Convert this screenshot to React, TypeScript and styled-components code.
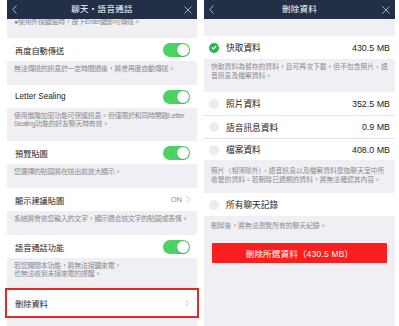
import React from "react";
import styled, { createGlobalStyle } from "styled-components";

const GlobalStyle = createGlobalStyle`
  html, body { margin: 0; padding: 0; background: #ffffff; }
  body { font-family: "Liberation Sans", "Noto Sans CJK TC", sans-serif; }
  * { box-sizing: border-box; }
`;

const Stage = styled.div`
  display: flex;
  gap: 7px;
  padding-left: 7px;
  height: 326px;
  width: 399px;
  overflow: hidden;
`;

const Phone = styled.div<{ $w: number }>`
  width: ${(p) => p.$w}px;
  flex-shrink: 0;
  height: 326px;
  background: #efeff4;
  display: flex;
  flex-direction: column;
`;

const NavBar = styled.div`
  position: relative;
  z-index: 1;
  height: 19px;
  flex-shrink: 0;
  background: #232e47;
  display: grid;
  grid-template-columns: 20px 1fr 20px;
  align-items: center;
  color: #ffffff;
`;

const NavTitle = styled.div`
  text-align: center;
  font-size: 8.5px;
  line-height: 19px;
  letter-spacing: 0.3px;
`;

const NavIcon = styled.div<{ $align: string }>`
  display: flex;
  justify-content: ${(p) => p.$align};
  padding: 0 5px;
`;

const Note = styled.div<{ $h: number; $pt: number; $fs: number; $lh: number; $ls?: number }>`
  height: ${(p) => p.$h}px;
  flex-shrink: 0;
  padding: ${(p) => p.$pt}px 6px 0 7px;
  font-size: ${(p) => p.$fs}px;
  line-height: ${(p) => p.$lh}px;
  letter-spacing: ${(p) => p.$ls ?? 0}px;
  color: #8a8a8f;
  white-space: nowrap;
`;

const CutText = styled.div`
  margin-top: -1px;
`;

const Row = styled.div<{ $h: number; $sep?: boolean; $pl: number; $pr: number; $fs: number }>`
  height: ${(p) => p.$h}px;
  flex-shrink: 0;
  background: #ffffff;
  display: flex;
  align-items: center;
  padding: 0 ${(p) => p.$pr}px 0 ${(p) => p.$pl}px;
  font-size: ${(p) => p.$fs}px;
  color: #1c1c1e;
  border-top: ${(p) => (p.$sep ? "1px solid #e2e2e7" : "none")};
`;

const Highlight = styled(Row)`
  outline: 2px solid #e52a25;
`;

const Label = styled.span`
  flex: 1;
  white-space: nowrap;
`;

const Value = styled.span`
  color: #1c1c1e;
  font-size: 8.9px;
`;

const Aside = styled.span`
  display: flex;
  align-items: center;
  gap: 4px;
  color: #8e8e93;
  font-size: 7.5px;
`;

const Toggle = styled.span`
  width: 27px;
  height: 14px;
  border-radius: 7px;
  background: #4bd262;
  position: relative;
  &::after {
    content: "";
    position: absolute;
    right: 1px;
    top: 1px;
    width: 12px;
    height: 12px;
    border-radius: 50%;
    background: #ffffff;
    box-shadow: 0 0.5px 1.5px rgba(0, 0, 0, 0.3);
  }
`;

const Circle = styled.span<{ $on?: boolean }>`
  width: 10px;
  height: 10px;
  border-radius: 50%;
  margin-right: 7px;
  flex-shrink: 0;
  background: ${(p) => (p.$on ? "#22b94a" : "#ebebf1")};
  display: flex;
  align-items: center;
  justify-content: center;
`;

const DangerButton = styled.button`
  margin: 13px 8px 0 8px;
  height: 20px;
  border: none;
  border-radius: 1px;
  background: #fb1e1e;
  color: #ffffff;
  font-family: inherit;
  font-size: 8.5px;
  letter-spacing: 0.2px;
  padding: 0;
`;

const Back = () => (
  <svg width="5" height="9" viewBox="0 0 5 9">
    <polyline points="4.5,0.5 0.8,4.5 4.5,8.5" fill="none" stroke="#d0d4dc" strokeWidth="0.8" />
  </svg>
);

const Close = () => (
  <svg width="8" height="8" viewBox="0 0 8 8">
    <path d="M0.5 0.5 L7.5 7.5 M7.5 0.5 L0.5 7.5" stroke="#c8ccd4" strokeWidth="0.8" />
  </svg>
);

const Chevron = () => (
  <svg width="4" height="7" viewBox="0 0 4 7">
    <polyline points="0.5,0.5 3.5,3.5 0.5,6.5" fill="none" stroke="#b8b8be" strokeWidth="0.8" />
  </svg>
);

const Check = () => (
  <svg width="6" height="5" viewBox="0 0 6 5">
    <polyline points="0.8,2.5 2.4,4 5.2,1" fill="none" stroke="#ffffff" strokeWidth="1.2" />
  </svg>
);

const Nav = ({ title }: { title: string }) => (
  <NavBar>
    <NavIcon $align="flex-start">
      <Back />
    </NavIcon>
    <NavTitle>{title}</NavTitle>
    <NavIcon $align="flex-end">
      <Close />
    </NavIcon>
  </NavBar>
);

const LRow = (props: { h?: number; children: React.ReactNode }) => (
  <Row $h={props.h ?? 23} $pl={8} $pr={7} $fs={8.2}>
    {props.children}
  </Row>
);

const LNote = ({ h, lines }: { h: number; lines: string[] }) => (
  <Note $h={h} $pt={4} $fs={7} $lh={8} $ls={-0.3}>
    {lines.map((l) => (
      <div key={l}>{l}</div>
    ))}
  </Note>
);

const RRow = (props: { h?: number; sep?: boolean; on?: boolean; label: string; value?: string }) => (
  <Row $h={props.h ?? 23} $sep={props.sep} $pl={5} $pr={5} $fs={8.7}>
    <Circle $on={props.on}>{props.on && <Check />}</Circle>
    <Label>{props.label}</Label>
    {props.value && <Value>{props.value}</Value>}
  </Row>
);

export default function App() {
  return (
    <>
      <GlobalStyle />
      <Stage>
        <Phone $w={190}>
          <Nav title="聊天・語音通話" />
          <Note $h={19} $pt={0} $fs={7} $lh={8} $ls={-0.3}>
            <CutText>●使用外接鍵盤時，按下Enter鍵即可傳送。</CutText>
          </Note>
          <LRow>
            <Label>再度自動傳送</Label>
            <Toggle />
          </LRow>
          <LNote h={24} lines={["無法傳送的訊息於一定時間過後，將會再度自動傳送。"]} />
          <LRow>
            <Label>Letter Sealing</Label>
            <Toggle />
          </LRow>
          <LNote h={33} lines={["使用進階加密功能可保護訊息。但僅限於和同時開啟Letter", "Sealing功能的好友聊天時有效。"]} />
          <LRow>
            <Label>預覽貼圖</Label>
            <Toggle />
          </LRow>
          <LNote h={24} lines={["您選擇的貼圖將在送出前放大顯示。"]} />
          <LRow>
            <Label>顯示建議貼圖</Label>
            <Aside>
              ON <Chevron />
            </Aside>
          </LRow>
          <LNote h={24} lines={["系統將會依您輸入的文字，顯示適合該文字的貼圖或表情。"]} />
          <LRow>
            <Label>語音通話功能</Label>
            <Toggle />
          </LRow>
          <LNote h={32} lines={["若您關閉本功能，將無法接聽來電，", "也無法收到未接來電的提醒。"]} />
          <Highlight $h={26} $pl={8} $pr={8} $fs={8.2}>
            <Label>刪除資料</Label>
            <Chevron />
          </Highlight>
        </Phone>
        <Phone $w={191}>
          <Nav title="刪除資料" />
          <Note $h={17} $pt={0} $fs={6.8} $lh={9} />
          <RRow on label="快取資料" value="430.5 MB" />
          <Note $h={33} $pt={2.5} $fs={6.8} $lh={9}>
            <div>快取資料為暫存的資料，且可再次下載。但不包含照片、語</div>
            <div>音訊息及檔案資料。</div>
          </Note>
          <RRow label="照片資料" value="352.5 MB" />
          <RRow sep label="語音訊息資料" value="0.9 MB" />
          <RRow sep h={22} label="檔案資料" value="408.0 MB" />
          <Note $h={33} $pt={5.5} $fs={6.8} $lh={9}>
            <div>照片（相簿除外）、語音訊息以及檔案資料是指聊天室中所</div>
            <div>收發的資料。若刪除已過期的資料，將無法確認其內容。</div>
          </Note>
          <RRow label="所有聊天記錄" />
          <Note $h={14} $pt={5} $fs={6.8} $lh={9}>
            <div>刪除後，將無法瀏覽所有的聊天紀錄。</div>
          </Note>
          <DangerButton>刪除所選資料（430.5 MB）</DangerButton>
        </Phone>
      </Stage>
    </>
  );
}
